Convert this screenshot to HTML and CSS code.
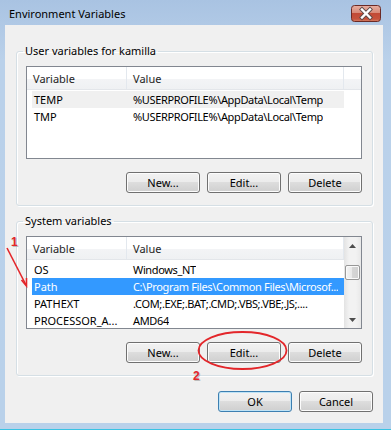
FILE: index.html
```html
<!DOCTYPE html>
<html lang="en">
<head>
    <meta charset="UTF-8">
    <title>Environment Variables</title>
    <link rel="stylesheet" href="styles.css">
</head>
<body>
    <div class="window">
        <div class="titlebar">
            <span class="title">Environment Variables</span>
            <button class="close-btn" aria-label="Close">
                <svg width="30" height="17" viewBox="0 0 30 17">
                    <defs>
                        <linearGradient id="closeGrad" x1="0" y1="0" x2="0" y2="1">
                            <stop offset="0" stop-color="#e8b0a2"/>
                            <stop offset="0.45" stop-color="#d88a78"/>
                            <stop offset="0.5" stop-color="#c24a36"/>
                            <stop offset="0.85" stop-color="#c6523c"/>
                            <stop offset="1" stop-color="#d8866c"/>
                        </linearGradient>
                    </defs>
                    <rect x="0.5" y="0.5" width="29" height="16" rx="3" fill="url(#closeGrad)" stroke="#6b2a25"/>
                    <path d="M11 4.5 L19 12.5 M19 4.5 L11 12.5" stroke="#5b4a48" stroke-width="4.2" stroke-linecap="square"/>
                    <path d="M11 4.5 L19 12.5 M19 4.5 L11 12.5" stroke="#fff" stroke-width="2.4" stroke-linecap="square"/>
                </svg>
            </button>
        </div>

        <div class="client">
            <fieldset class="group">
                <legend>User variables for kamilla</legend>
                <div class="listbox">
                    <div class="list-main">
                        <div class="list-head">
                            <div class="col-var">Variable</div>
                            <div class="col-val">Value</div>
                            <div class="col-fill"></div>
                        </div>
                        <div class="list-body">
                            <div class="row inactive">
                                <span class="cell-var">TEMP</span>
                                <span class="cell-val">%USERPROFILE%\AppData\Local\Temp</span>
                            </div>
                            <div class="row">
                                <span class="cell-var">TMP</span>
                                <span class="cell-val">%USERPROFILE%\AppData\Local\Temp</span>
                            </div>
                        </div>
                    </div>
                </div>
                <div class="btn-row">
                    <button class="btn">New...</button>
                    <button class="btn">Edit...</button>
                    <button class="btn">Delete</button>
                </div>
            </fieldset>

            <fieldset class="group">
                <legend>System variables</legend>
                <div class="listbox">
                    <div class="list-main">
                        <div class="list-head">
                            <div class="col-var">Variable</div>
                            <div class="col-val">Value</div>
                        </div>
                        <div class="list-body">
                            <div class="row">
                                <span class="cell-var">OS</span>
                                <span class="cell-val">Windows_NT</span>
                            </div>
                            <div class="row selected">
                                <span class="cell-var">Path</span>
                                <span class="cell-val">C:\Program Files\Common Files\Microsof...</span>
                            </div>
                            <div class="row">
                                <span class="cell-var">PATHEXT</span>
                                <span class="cell-val">.COM;.EXE;.BAT;.CMD;.VBS;.VBE;.JS;....</span>
                            </div>
                            <div class="row">
                                <span class="cell-var">PROCESSOR_A...</span>
                                <span class="cell-val">AMD64</span>
                            </div>
                        </div>
                    </div>
                    <div class="scrollbar">
                        <div class="sb-btn">
                            <svg width="7" height="4" viewBox="0 0 7 4"><path d="M0 4 L3.5 0 L7 4 Z" fill="#4d4d4d"/></svg>
                        </div>
                        <div class="sb-track"><div class="sb-thumb"></div></div>
                        <div class="sb-btn">
                            <svg width="7" height="4" viewBox="0 0 7 4"><path d="M0 0 L3.5 4 L7 0 Z" fill="#4d4d4d"/></svg>
                        </div>
                    </div>
                </div>
                <div class="btn-row">
                    <button class="btn">New...</button>
                    <button class="btn">Edit...</button>
                    <button class="btn">Delete</button>
                </div>
            </fieldset>

            <div class="dialog-buttons">
                <button class="btn default">OK</button>
                <button class="btn">Cancel</button>
            </div>
        </div>

        <!-- red hand-drawn marks over the dialog -->
        <svg class="marks" width="391" height="430" viewBox="0 0 391 430">
            <text x="12" y="247" class="mark-shadow">1</text>
            <text x="11" y="246" class="mark-num">1</text>
            <path d="M7 248 L26 285" stroke="#e3262a" stroke-width="1.6" fill="none"/>
            <path d="M21.5 280 L26.5 286 L26.5 278" stroke="#e3262a" stroke-width="1.6" fill="none"/>
            <ellipse cx="242.5" cy="350.5" rx="44" ry="18.5" stroke="#e3262a" stroke-width="1.8" fill="none"/>
            <text x="194" y="381" class="mark-shadow">2</text>
            <text x="193" y="380" class="mark-num">2</text>
        </svg>
    </div>
</body>
</html>
```

FILE: styles.css
```css
* {
    box-sizing: border-box;
}
body {
    margin: 0;
    background: #1d3550;
    font-family: "Noto Sans", "Open Sans", sans-serif;
    font-size: 11px;
    color: #000;
}
.window {
    position: relative;
    width: 391px;
    height: 430px;
    background: linear-gradient(#a9c3e2, #bad1ea 60px, #b9d1ea);
    border-bottom: 1px solid #39c3e3;
}
.titlebar {
    display: flex;
    align-items: flex-start;
    height: 25px;
    padding-left: 9px;
}
.title {
    margin-top: 6px;
    line-height: 16px;
    font-size: 11px;
}
.close-btn {
    margin: 5px 10px 0 auto;
    padding: 0;
    border: none;
    background: none;
    width: 30px;
    height: 17px;
    display: block;
}
.close-btn svg {
    display: block;
}
.client {
    margin: 0 8px 0 5px;
    height: 398px;
    background: #f0f0f0;
    padding: 18px 10px 11px 11px;
}
.group {
    margin: 0;
    padding: 7px 10px 12px 9px;
    border: 1px solid #d5dfe5;
    border-radius: 3px;
    box-shadow: inset 1px 1px 0 #fff, 1px 1px 0 #fff;
}
.group + .group {
    margin-top: 7px;
}
.group legend {
    padding: 0 2px;
    margin-left: -3px;
    line-height: 16px;
}
.listbox {
    display: flex;
    height: 93px;
    border: 1px solid #828790;
    background: #fff;
    overflow: hidden;
}
.list-main {
    flex: 1;
    min-width: 0;
}
.list-head {
    display: flex;
    height: 23px;
    background: linear-gradient(#fff 0, #fff 55%, #f3f4f6 55%, #eff1f3 100%);
    border-bottom: 1px solid #e3e6ea;
    color: #1e1e1e;
}
.list-head > div {
    display: flex;
    align-items: center;
    padding-left: 6px;
}
.col-var {
    width: 100px;
    border-right: 1px solid #e3e8ee;
}
.col-val {
    width: 217px;
    border-right: 1px solid #e3e8ee;
}
.col-fill {
    flex: 1;
}
.list-body {
    padding-top: 1px;
}
.row {
    display: flex;
    align-items: center;
    height: 17px;
    width: 312px;
    margin-left: 5px;
    white-space: nowrap;
}
.row.inactive {
    background: #f0f0f0;
}
.row.selected {
    background: #3399ff;
    color: #fff;
}
.cell-var {
    width: 95px;
    padding-left: 2px;
    overflow: hidden;
}
.cell-val {
    padding-left: 6px;
    letter-spacing: -0.35px;
    overflow: hidden;
}
.scrollbar {
    width: 17px;
    display: flex;
    flex-direction: column;
    background: linear-gradient(to right, #e3e3e3, #f2f2f2 30%, #f2f2f2 70%, #e8e8e8);
}
.sb-btn {
    height: 17px;
    display: flex;
    align-items: center;
    justify-content: center;
}
.sb-btn svg {
    display: block;
}
.sb-track {
    flex: 1;
}
.sb-thumb {
    width: 15px;
    height: 15px;
    margin: 11px auto 0;
    border: 1px solid #979797;
    border-radius: 2px;
    background: linear-gradient(to right, #f4f4f4, #e8e8e8 50%, #d6d6d6 50%, #d0d0d0);
    box-shadow: inset 0 0 0 1px #fafafa;
}
.btn-row {
    display: flex;
    justify-content: flex-end;
    gap: 7px;
    margin-top: 13px;
}
.btn {
    width: 74px;
    height: 21px;
    padding: 0;
    border: 1px solid #707070;
    border-radius: 3px;
    background: linear-gradient(#f2f2f2 0%, #ebebeb 50%, #dddddd 50%, #cfcfcf 100%);
    box-shadow: inset 0 0 0 1px #fcfcfc;
    font-family: inherit;
    font-size: 11px;
    color: #000;
}
.btn.default {
    border-color: #3c7fb1;
    box-shadow: inset 0 0 0 1px #bfe3f6;
}
.dialog-buttons {
    display: flex;
    justify-content: flex-end;
    gap: 7px;
    margin-top: 15px;
}
.marks {
    position: absolute;
    top: 0;
    left: 0;
    pointer-events: none;
}
.mark-num {
    font-family: "Liberation Sans", Arial, sans-serif;
    font-weight: bold;
    font-size: 12px;
    fill: #e3262a;
}
.mark-shadow {
    font-family: "Liberation Sans", Arial, sans-serif;
    font-weight: bold;
    font-size: 12px;
    fill: #9a9a9a;
    opacity: 0.6;
}
```
